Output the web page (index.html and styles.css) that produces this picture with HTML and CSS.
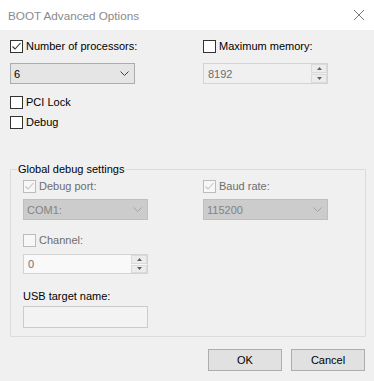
FILE: index.html
```
<!DOCTYPE html>
<html lang="en">
<head>
  <meta charset="UTF-8">
  <title>BOOT Advanced Options</title>
  <link rel="stylesheet" href="styles.css">
</head>
<body>
  <div class="dialog">
    <!-- Заголовок окна -->
    <div class="titlebar">
      <span class="title">BOOT Advanced Options</span>
      <svg class="close" width="12" height="12" viewBox="0 0 12 12"><path d="M1 1 L11 11 M11 1 L1 11" stroke="#7a7a7a" stroke-width="1" fill="none"/></svg>
    </div>

    <div class="content">
      <div class="grid">
        <label class="check">
          <span class="box"><svg width="11" height="11" viewBox="0 0 11 11"><polyline points="1.5,5.5 4,8 9.5,2" stroke="#333" stroke-width="1.1" fill="none"/></svg></span>
          Number of processors:
        </label>
        <label class="check">
          <span class="box"></span>
          Maximum memory:
        </label>

        <div class="combo">
          <span>6</span>
          <svg width="9" height="5" viewBox="0 0 9 5"><polyline points="0.5,0.5 4.5,4.5 8.5,0.5" stroke="#444" stroke-width="1" fill="none"/></svg>
        </div>
        <div class="spin disabled">
          <span>8192</span>
          <div class="arrows">
            <div class="arrow"><svg width="5" height="3" viewBox="0 0 5 3"><polygon points="2.5,0 5,3 0,3" fill="#606060"/></svg></div>
            <div class="arrow"><svg width="5" height="3" viewBox="0 0 5 3"><polygon points="0,0 5,0 2.5,3" fill="#606060"/></svg></div>
          </div>
        </div>
      </div>

      <div class="options">
        <label class="check"><span class="box"></span>PCI Lock</label>
        <label class="check"><span class="box"></span>Debug</label>
      </div>

      <!-- Группа настроек отладки -->
      <fieldset class="group">
        <legend>Global debug settings</legend>
        <div class="grid inner">
          <label class="check off">
            <span class="box"><svg width="11" height="11" viewBox="0 0 11 11"><polyline points="1.5,5.5 4,8 9.5,2" stroke="#c4c4c4" stroke-width="1.1" fill="none"/></svg></span>
            Debug port:
          </label>
          <label class="check off">
            <span class="box"><svg width="11" height="11" viewBox="0 0 11 11"><polyline points="1.5,5.5 4,8 9.5,2" stroke="#c4c4c4" stroke-width="1.1" fill="none"/></svg></span>
            Baud rate:
          </label>

          <div class="combo disabled">
            <span>COM1:</span>
            <svg width="9" height="5" viewBox="0 0 9 5"><polyline points="0.5,0.5 4.5,4.5 8.5,0.5" stroke="#a3a3a3" stroke-width="1" fill="none"/></svg>
          </div>
          <div class="combo disabled">
            <span>115200</span>
            <svg width="9" height="5" viewBox="0 0 9 5"><polyline points="0.5,0.5 4.5,4.5 8.5,0.5" stroke="#a3a3a3" stroke-width="1" fill="none"/></svg>
          </div>
        </div>

        <label class="check off channel"><span class="box"></span>Channel:</label>
        <div class="spin disabled light">
          <span>0</span>
          <div class="arrows">
            <div class="arrow"><svg width="5" height="3" viewBox="0 0 5 3"><polygon points="2.5,0 5,3 0,3" fill="#606060"/></svg></div>
            <div class="arrow"><svg width="5" height="3" viewBox="0 0 5 3"><polygon points="0,0 5,0 2.5,3" fill="#606060"/></svg></div>
          </div>
        </div>

        <div class="usb-label">USB target name:</div>
        <div class="textbox"></div>
      </fieldset>

      <div class="buttons">
        <button class="button">OK</button>
        <button class="button">Cancel</button>
      </div>
    </div>
  </div>
</body>
</html>
```

FILE: styles.css
```
/* Общие стили */
body {
  margin: 0;
  font-family: "Liberation Sans", Arial, sans-serif;
  font-size: 11px;
  color: #000;
  background-color: #f0f0f0;
}

.dialog {
  width: 374px;
  height: 381px;
  background-color: #f0f0f0;
}

/* Заголовок */
.titlebar {
  height: 30px;
  background-color: #fff;
  display: flex;
  align-items: center;
  justify-content: space-between;
  padding: 0 8px 0 8px;
  box-sizing: border-box;
}

.title {
  color: #8a8a8a;
  font-size: 11.7px;
}

.close {
  margin-right: 1px;
}

.content {
  padding: 10px 9px 0 10px;
}

.grid {
  display: grid;
  grid-template-columns: 193px 125px;
  row-gap: 10px;
}

/* Чекбоксы */
.check {
  display: flex;
  align-items: center;
  gap: 3px;
  height: 13px;
  line-height: 13px;
}

.box {
  width: 13px;
  height: 13px;
  box-sizing: border-box;
  border: 1px solid #333;
  background-color: #fff;
  display: flex;
  align-items: center;
  justify-content: center;
}

.check.off {
  color: #6d6d6d;
}

.check.off .box {
  border-color: #bcbcbc;
  background-color: #f7f7f7;
}

/* Выпадающие списки */
.combo {
  width: 125px;
  height: 21px;
  box-sizing: border-box;
  border: 1px solid #acacac;
  background-color: #e5e5e5;
  display: flex;
  align-items: center;
  justify-content: space-between;
  padding: 0 5px 0 3px;
}

.combo.disabled {
  background-color: #cccccc;
  border-color: #bfbfbf;
  color: #838383;
}

/* Поля со стрелками */
.spin {
  width: 125px;
  height: 21px;
  box-sizing: border-box;
  border: 1px solid #d3d3d3;
  background-color: #f0f0f0;
  display: flex;
  align-items: center;
  justify-content: space-between;
  padding-left: 4px;
  color: #6d6d6d;
}

.spin.light {
  background-color: #f9f9f9;
  height: 20px;
}

.arrows {
  display: flex;
  flex-direction: column;
  align-self: stretch;
  width: 16px;
  gap: 1px;
}

.arrow {
  flex: 1;
  border: 1px solid #dadada;
  background-color: #ececec;
  display: flex;
  align-items: center;
  justify-content: center;
}

.options {
  margin-top: 12px;
  display: flex;
  flex-direction: column;
  gap: 7px;
}

/* Группа */
.group {
  margin: 34px 0 0 0;
  padding: 5px 12px 8px 12px;
  border: 1px solid #dcdcdc;
  width: 356px;
  box-sizing: border-box;
}

.group legend {
  padding: 0 1px;
  margin-left: -6px;
}

.grid.inner {
  grid-template-columns: 180px 125px;
  row-gap: 6px;
}

.channel {
  margin-top: 14px;
  margin-bottom: 7px;
}

.usb-label {
  margin-top: 16px;
  margin-bottom: 4px;
}

.textbox {
  width: 125px;
  height: 22px;
  box-sizing: border-box;
  border: 1px solid #cccccc;
  background-color: #f3f3f3;
}

/* Кнопки */
.buttons {
  display: flex;
  justify-content: flex-end;
  gap: 9px;
  margin-top: 12px;
}

.button {
  width: 74px;
  height: 22px;
  background-color: #e1e1e1;
  border: 1px solid #adadad;
  font-family: "Liberation Sans", Arial, sans-serif;
  font-size: 11px;
  color: #000;
  padding: 0;
}
```
